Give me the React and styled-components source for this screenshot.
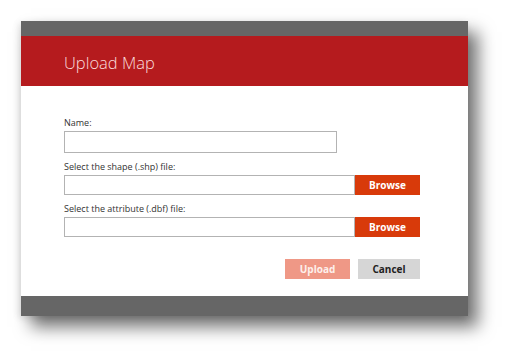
import React from 'react';
import styled, { createGlobalStyle } from 'styled-components';

const GlobalStyle = createGlobalStyle`
    html, body {
        margin: 0;
        background: #ffffff;
    }
    body {
        font-family: "Open Sans", "Liberation Sans", sans-serif;
    }
`

//STYLING
const Page = styled.div`
    width: 510px;
    height: 360px;
    padding: 21px 0 0 21px;
    box-sizing: border-box;
`
const Dialog = styled.div`
    width: 447px;
    display: flex;
    flex-direction: column;
    box-shadow: 10px 11px 16px rgba(0, 0, 0, 0.55), -2px 2px 7px rgba(0, 0, 0, 0.12);
`
const GrayBar = styled.div`
    height: ${props => props.h}px;
    background: #666666;
`
const Header = styled.div`
    height: 50px;
    background: #b51b1e;
    display: flex;
    align-items: center;
    padding-left: 43px;
    padding-top: 2px;
    box-sizing: border-box;
`
const Title = styled.h1`
    margin: 0;
    font-size: 16.5px;
    font-weight: 300;
    color: #fadcdc;
`
const Body = styled.div`
    background: #ffffff;
    padding: 30px 48px 17px 43px;
    display: flex;
    flex-direction: column;
    gap: 7px;
`
const Field = styled.div`
    display: flex;
    flex-direction: column;
`
const Label = styled.label`
    font-size: 9px;
    line-height: 14px;
    color: #333333;
    margin-bottom: 1px;
`
const InputRow = styled.div`
    display: flex;
`
const TextInput = styled.div`
    width: ${props => props.w}px;
    height: ${props => props.h}px;
    border: 1px solid #b3b3b3;
    box-sizing: border-box;
    background: #ffffff;
`
const Button = styled.button`
    width: ${props => props.w}px;
    height: 20px;
    border: none;
    padding: 0;
    font-family: "Open Sans", "Liberation Sans", sans-serif;
    font-size: 10px;
    font-weight: 700;
    color: ${props => props.fg};
    background: ${props => props.bg};
`
const Actions = styled.div`
    display: flex;
    justify-content: flex-end;
    gap: 8px;
    margin-top: 15px;
`

const App = () => {
    return (
        <Page>
            <GlobalStyle />
            <Dialog>
                <GrayBar h={15} />
                <Header>
                    <Title>Upload Map</Title>
                </Header>
                <Body>
                    <Field>
                        <Label>Name:</Label>
                        <TextInput w={273} h={22} />
                    </Field>
                    <Field>
                        <Label>Select the shape (.shp) file:</Label>
                        <InputRow>
                            <TextInput w={291} h={20} />
                            <Button w={65} bg="#d83a0a" fg="#ffffff">Browse</Button>
                        </InputRow>
                    </Field>
                    <Field>
                        <Label>Select the attribute (.dbf) file:</Label>
                        <InputRow>
                            <TextInput w={291} h={20} />
                            <Button w={65} bg="#d83a0a" fg="#ffffff">Browse</Button>
                        </InputRow>
                    </Field>
                    <Actions>
                        <Button w={65} bg="#ef9886" fg="#fdf0ec">Upload</Button>
                        <Button w={62} bg="#d6d6d6" fg="#222222">Cancel</Button>
                    </Actions>
                </Body>
                <GrayBar h={20} />
            </Dialog>
        </Page>
    )
}

export default App;
